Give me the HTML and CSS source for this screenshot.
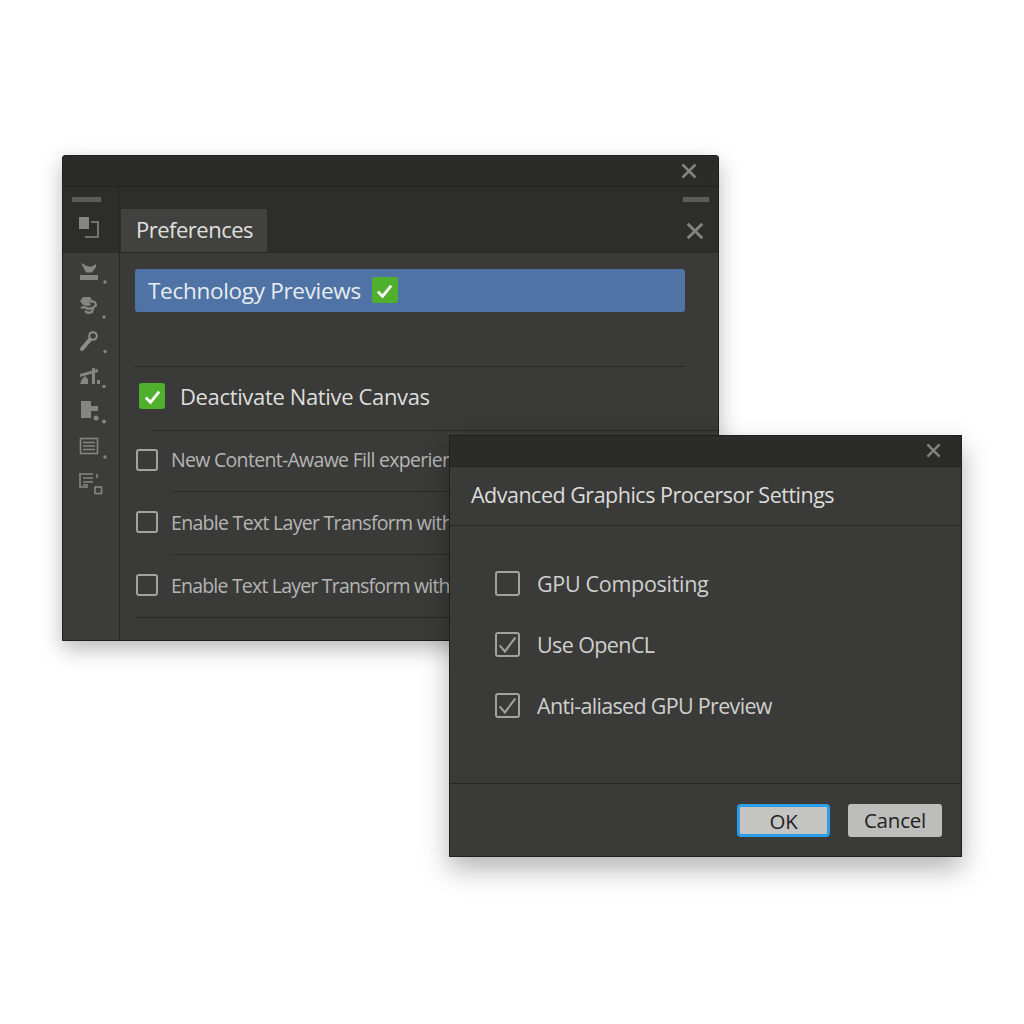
FILE: index.html
```html
<!DOCTYPE html>
<html lang="en">
<head>
<meta charset="utf-8">
<title>Preferences</title>
<link rel="stylesheet" href="styles.css">
</head>
<body>
<section class="window main-window">
  <header class="titlebar main-titlebar">
    <svg class="close close-top" viewBox="0 0 16 16"><path d="M1.500 1.500 14.500 14.500M14.500 1.500 1.500 14.500"/></svg>
  </header>
  <div class="main-body">
    <aside class="rail">
      <div class="rail-head">
        <span class="grip"></span>
        <svg class="rail-icon" viewBox="0 0 30 24"><rect class="fill" x="1" y="0" width="10" height="12"/><path class="line" d="M13 5h7v15H7"/></svg>
      </div>
      <div class="rail-tools">
        <svg class="rail-icon" viewBox="0 0 30 24"><path class="fill" d="M3 2 10 5.500h4L18 3v3l-4 5.500H8z"/><rect class="fill" x="2" y="14" width="18" height="5"/><circle class="fill" cx="27" cy="21" r="1.700"/></svg>
        <svg class="rail-icon" viewBox="0 0 30 24"><path class="fill" d="M5 1h7l2 3-3 2 2 3-3 1-5-1-3-4z"/><path class="swirl" d="M3 12q4-2 7 1l4-1M12 6q5-2 6 3l-3 3-1 4-4 1-3-2"/><circle class="fill" cx="26" cy="21" r="1.700"/></svg>
        <svg class="rail-icon" viewBox="0 0 30 24"><path class="thick" d="M4 18 12 8.500"/><circle class="ring" cx="15" cy="5" r="3.800"/><circle class="fill" cx="27" cy="20.500" r="1.700"/></svg>
        <svg class="rail-icon" viewBox="0 0 30 24"><path class="fill" d="M2 18l2-5 3-3 3 3v5zM14 2h3v16h-3zM2 8l18-5v3L2 11zM19 14h3v4h-3z"/><circle class="fill" cx="26" cy="20.500" r="1.700"/></svg>
        <svg class="rail-icon" viewBox="0 0 30 24"><path class="fill" d="M3 0h10v5h7v5h-7v7H3z"/><circle class="fill" cx="18" cy="17" r="2.500"/><circle class="fill" cx="26" cy="20.500" r="1.900"/></svg>
        <svg class="rail-icon" viewBox="0 0 30 24"><rect class="line" x="2.500" y="2.500" width="17" height="15"/><path class="line" d="M5 6.500h12M5 10h12M5 13.500h12"/><circle class="fill" cx="27" cy="21" r="1.700"/></svg>
        <svg class="rail-icon" viewBox="0 0 30 24"><path class="line" d="M1 3h14M2 3v13h8M5 7h10M5 11h10M5 14h5M19 3v4"/><rect class="line" x="17" y="16" width="6.500" height="6.500"/></svg>
      </div>
    </aside>
    <div class="pane">
      <div class="tabbar">
        <div class="tab">Preferences</div>
        <div class="tabbar-tools">
          <span class="grip"></span>
          <svg class="close close-tab" viewBox="0 0 16 16"><path d="M1.500 1.500 14.500 14.500M14.500 1.500 1.500 14.500"/></svg>
        </div>
      </div>
      <div class="pane-body">
        <div class="banner">
          <span>Technology Previews</span>
          <span class="check-green"><svg viewBox="0 0 24 24"><path d="M5 13l5 5 9-11"/></svg></span>
        </div>
        <div class="native-row">
          <span class="check-green"><svg viewBox="0 0 24 24"><path d="M5 13l5 5 9-11"/></svg></span>
          <span>Deactivate Native Canvas</span>
        </div>
        <div class="option-row first-option"><span class="box"></span><span>New Content-Awawe Fill experience</span></div>
        <div class="option-row"><span class="box"></span><span>Enable Text Layer Transform with GPU</span></div>
        <div class="option-row last-option"><span class="box"></span><span>Enable Text Layer Transform with GPU</span></div>
      </div>
    </div>
  </div>
</section>

<section class="window dialog">
  <header class="titlebar dialog-titlebar">
    <svg class="close close-dialog" viewBox="0 0 16 16"><path d="M1.500 1.500 14.500 14.500M14.500 1.500 1.500 14.500"/></svg>
  </header>
  <h1 class="dialog-title">Advanced Graphics Procersor Settings</h1>
  <div class="dialog-options">
    <label class="dialog-option"><span class="box box-large"></span><span>GPU Compositing</span></label>
    <label class="dialog-option option-tight"><span class="box box-large"><svg viewBox="0 0 24 24"><path d="M3 13l6 7L21 4"/></svg></span><span>Use OpenCL</span></label>
    <label class="dialog-option option-tighter"><span class="box box-large"><svg viewBox="0 0 24 24"><path d="M3 13l6 7L21 4"/></svg></span><span>Anti-aliased GPU Preview</span></label>
  </div>
  <footer class="dialog-footer">
    <button class="btn btn-ok">OK</button>
    <button class="btn btn-cancel">Cancel</button>
  </footer>
</section>
</body>
</html>
```
FILE: styles.css
```css
* { box-sizing: border-box; }
html, body { margin: 0; height: 100%; }
body {
  width: 1024px;
  height: 1024px;
  position: relative;
  overflow: hidden;
  background: #fff;
  font-family: "Open Sans", "Noto Sans", sans-serif;
  color: #dcdcda;
}
.window {
  position: absolute;
  background: #3a3a39;
  border: 1px solid #1f1f1f;
  display: flex;
  flex-direction: column;
}
.main-window {
  left: 62px;
  top: 155px;
  width: 657px;
  height: 486px;
  border-radius: 3px 3px 0 0;
  box-shadow: 0 8px 22px rgba(0, 0, 0, 0.28);
}
.dialog {
  left: 449px;
  top: 435px;
  width: 513px;
  height: 422px;
  box-shadow: 0 12px 26px rgba(0, 0, 0, 0.3);
}
.titlebar {
  flex: none;
  background: #2b2b2a;
  border-bottom: 1px solid #232323;
  display: flex;
  justify-content: flex-end;
}
.main-titlebar { height: 31px; padding: 7px 21px 0 0; }
.dialog-titlebar { height: 31px; padding: 7px 20px 0 0; }
.close { fill: none; stroke: #828280; stroke-width: 2.600; }
.close-top { width: 16px; height: 16px; }
.close-tab { width: 18px; height: 18px; margin-right: 8px; flex: none; }
.close-dialog { width: 15px; height: 15px; }

.main-body { flex: 1; display: flex; min-height: 0; }
.rail {
  flex: none;
  width: 57px;
  border-right: 1px solid #262626;
  display: flex;
  flex-direction: column;
}
.rail-head {
  height: 66px;
  background: #2d2d2c;
  padding: 10px 0 0 9px;
  display: flex;
  flex-direction: column;
  gap: 15px;
}
.rail-head .rail-icon { margin-left: 6px; }
.grip { display: block; width: 29px; height: 5px; background: #5b5b5a; flex: none; }
.rail-icon { width: 30px; height: 24px; display: block; fill: none; flex: none; }
.rail-tools {
  padding: 8px 0 0 15px;
  display: flex;
  flex-direction: column;
  gap: 11px;
  background: #3c3c3b;
  flex: 1;
}
.fill { fill: #858583; stroke: none; }
.line { fill: none; stroke: #858583; stroke-width: 1.600; }
.swirl { fill: none; stroke: #858583; stroke-width: 2.400; }
.ring { fill: none; stroke: #8e8e8c; stroke-width: 2; }
.thick { fill: none; stroke: #8e8e8c; stroke-width: 4; stroke-linecap: round; }

.pane { flex: 1; min-width: 0; display: flex; flex-direction: column; }
.tabbar {
  flex: none;
  height: 66px;
  background: #2d2d2c;
  display: flex;
  align-items: flex-end;
  justify-content: space-between;
  padding-left: 1px;
  border-bottom: 1px solid #2a2a2a;
}
.tab {
  width: 146px;
  height: 43px;
  background: #414140;
  color: #e0e0de;
  font-size: 22px;
  line-height: 41px;
  padding-left: 15px;
  letter-spacing: -0.500px;
}
.tabbar-tools {
  align-self: flex-start;
  width: 34px;
  height: 65px;
  padding-top: 10px;
  display: flex;
  flex-direction: column;
  align-items: flex-end;
  gap: 20px;
  margin-right: 6px;
}
.tabbar-tools .grip { width: 26px; margin-right: 3px; }
.pane-body { flex: 1; padding: 16px 33px 0 15px; overflow: hidden; background: #3a3a39; }
.banner {
  height: 43px;
  background: #4e73a4;
  border-radius: 3px;
  padding: 0 0 1px 13px;
  display: flex;
  align-items: center;
  gap: 11px;
  font-size: 22.500px;
  letter-spacing: -0.300px;
  color: #e8ecf0;
}
.check-green {
  flex: none;
  width: 26px;
  height: 26px;
  background: #4fb02e;
  border-radius: 3px;
  display: flex;
  align-items: center;
  justify-content: center;
}
.check-green svg { width: 23px; height: 23px; fill: none; stroke: #f4f8f0; stroke-width: 3; }
.native-row {
  margin-top: 54px;
  height: 64px;
  padding: 0 0 5px 4px;
  border-top: 1px solid #282828;
  display: flex;
  align-items: center;
  gap: 15px;
  font-size: 22px;
  letter-spacing: -0.350px;
  color: #dededc;
}
.option-row {
  height: 63px;
  margin-right: -60px;
  padding: 0 0 3px 1px;
  display: flex;
  align-items: center;
  gap: 13px;
  font-size: 19.500px;
  letter-spacing: -0.700px;
  color: #b5b5b3;
  white-space: nowrap;
  position: relative;
}
.option-row::after {
  content: "";
  position: absolute;
  left: 36px;
  right: 0;
  bottom: 0;
  height: 1px;
  background: #2c2c2c;
}
.first-option { height: 62px; }
.first-option::before {
  content: "";
  position: absolute;
  left: 17px;
  right: 0;
  top: 0;
  height: 1px;
  background: #282828;
}
.last-option { letter-spacing: -0.800px; }
.last-option::after { left: 0; background: #262626; }
.box {
  flex: none;
  width: 22px;
  height: 22px;
  border: 2px solid #a2a2a0;
  border-radius: 3px;
  display: flex;
  align-items: center;
  justify-content: center;
}
.box-large { width: 25px; height: 25px; }
.box svg { width: 21px; height: 21px; fill: none; stroke: #9e9e9c; stroke-width: 2.400; }

.dialog-title {
  margin: 0;
  flex: none;
  height: 59px;
  border-bottom: 1px solid #282828;
  padding-left: 21px;
  font-size: 21.500px;
  font-weight: 400;
  line-height: 55px;
  letter-spacing: -0.500px;
  color: #dcdcda;
}
.dialog-options {
  flex: 1;
  padding: 42px 0 0 45px;
  display: flex;
  flex-direction: column;
  gap: 31px;
}
.dialog-option {
  display: flex;
  align-items: center;
  gap: 17px;
  height: 30px;
  font-size: 21.500px;
  letter-spacing: -0.300px;
  color: #cfcfcd;
}
.option-tight { letter-spacing: -0.600px; }
.option-tighter { letter-spacing: -0.680px; }
.dialog-footer {
  flex: none;
  height: 73px;
  border-top: 1px solid #272727;
  padding: 20px 19px 0 0;
  display: flex;
  justify-content: flex-end;
  align-items: flex-start;
  gap: 18px;
}
.btn {
  width: 94px;
  height: 33px;
  border: 0;
  border-radius: 3px;
  background: #bdbdbb;
  color: #222;
  font-family: inherit;
  font-size: 20.500px;
  line-height: 29px;
  padding: 0;
  letter-spacing: -0.200px;
}
.btn-ok {
  width: 93px;
  padding-bottom: 3px;
  background: #c4c4c2;
  border: 3px solid #2a9ee8;
  border-radius: 4px;
}
```
